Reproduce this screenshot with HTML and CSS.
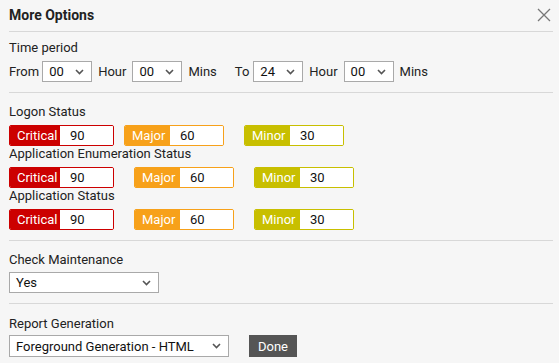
FILE: index.html
```html
<!DOCTYPE html>
<html lang="en">
<head>
    <meta charset="UTF-8">
    <title>More Options</title>
    <link rel="stylesheet" href="styles.css">
</head>
<body>
    <div class="dialog">
        <div class="header">
            <h1>More Options</h1>
            <svg class="close" width="14" height="14" viewBox="0 0 14 14">
                <path d="M1 1 L13 13 M13 1 L1 13" stroke="#777" stroke-width="1.3" fill="none"/>
            </svg>
        </div>

        <div class="section">
            <div class="label">Time period</div>
            <div class="row">
                <span class="txt first">From</span>
                <div class="select sm"><span>00</span><svg class="chev" width="9" height="6" viewBox="0 0 9 6"><path d="M1 1 L4.5 4.5 L8 1" stroke="#555" stroke-width="1.6" fill="none"/></svg></div>
                <span class="txt">Hour</span>
                <div class="select sm"><span>00</span><svg class="chev" width="9" height="6" viewBox="0 0 9 6"><path d="M1 1 L4.5 4.5 L8 1" stroke="#555" stroke-width="1.6" fill="none"/></svg></div>
                <span class="txt">Mins</span>
                <span class="txt to">To</span>
                <div class="select sm"><span>24</span><svg class="chev" width="9" height="6" viewBox="0 0 9 6"><path d="M1 1 L4.5 4.5 L8 1" stroke="#555" stroke-width="1.6" fill="none"/></svg></div>
                <span class="txt">Hour</span>
                <div class="select sm"><span>00</span><svg class="chev" width="9" height="6" viewBox="0 0 9 6"><path d="M1 1 L4.5 4.5 L8 1" stroke="#555" stroke-width="1.6" fill="none"/></svg></div>
                <span class="txt">Mins</span>
            </div>
        </div>

        <div class="section status">
            <div class="group">
                <div class="label">Logon Status</div>
                <div class="row">
                    <div class="thr critical"><span class="tag">Critical</span><span class="val">90</span></div>
                    <div class="thr major near"><span class="tag">Major</span><span class="val">60</span></div>
                    <div class="thr minor"><span class="tag">Minor</span><span class="val">30</span></div>
                </div>
            </div>
            <div class="group">
                <div class="label">Application Enumeration Status</div>
                <div class="row">
                    <div class="thr critical"><span class="tag">Critical</span><span class="val">90</span></div>
                    <div class="thr major"><span class="tag">Major</span><span class="val">60</span></div>
                    <div class="thr minor"><span class="tag">Minor</span><span class="val">30</span></div>
                </div>
            </div>
            <div class="group">
                <div class="label">Application Status</div>
                <div class="row">
                    <div class="thr critical"><span class="tag">Critical</span><span class="val">90</span></div>
                    <div class="thr major"><span class="tag">Major</span><span class="val">60</span></div>
                    <div class="thr minor"><span class="tag">Minor</span><span class="val">30</span></div>
                </div>
            </div>
        </div>

        <div class="section maint">
            <div class="label">Check Maintenance</div>
            <div class="row">
                <div class="select md"><span>Yes</span><svg class="chev" width="9" height="6" viewBox="0 0 9 6"><path d="M1 1 L4.5 4.5 L8 1" stroke="#555" stroke-width="1.6" fill="none"/></svg></div>
            </div>
        </div>

        <div class="section report">
            <div class="label">Report Generation</div>
            <div class="row">
                <div class="select lg"><span>Foreground Generation - HTML</span><svg class="chev" width="9" height="6" viewBox="0 0 9 6"><path d="M1 1 L4.5 4.5 L8 1" stroke="#555" stroke-width="1.6" fill="none"/></svg></div>
                <button class="btn">Done</button>
            </div>
        </div>
    </div>
</body>
</html>
```

FILE: styles.css
```css
* {
    margin: 0;
    padding: 0;
    box-sizing: border-box;
}

body {
    font-family: Roboto, "Liberation Sans", sans-serif;
    font-size: 13px;
    color: #222;
    background: #f6f6f6;
    width: 559px;
    height: 363px;
    overflow: hidden;
}

.dialog {
    padding: 0 6px 0 9px;
}

.header {
    display: flex;
    align-items: center;
    justify-content: space-between;
    height: 32px;
    border-bottom: 1px solid #d8d8d8;
    padding-bottom: 1px;
}

.header h1 {
    font-size: 14px;
    font-weight: bold;
    color: #222;
}

.close {
    margin-right: 2px;
    margin-top: -1px;
}

.section {
    padding: 8px 0 10px;
    border-bottom: 1px solid #d8d8d8;
}

.label {
    line-height: 16px;
    height: 16px;
}

.row {
    display: flex;
    align-items: center;
    margin-top: 5px;
    height: 21px;
}

.txt {
    margin: 0 6px 0 6px;
}

.txt.first {
    margin-left: 0;
    margin-right: 3px;
}

.txt.to {
    margin-left: 12px;
    margin-right: 4px;
}

.select {
    display: flex;
    align-items: center;
    justify-content: space-between;
    height: 21px;
    background: #fff;
    border: 1px solid #a9a9a9;
    padding: 0 7px 0 6px;
    color: #111;
}

.select.sm {
    width: 50px;
}

.select.md {
    width: 150px;
}

.select.lg {
    width: 220px;
}

.status {
    padding-top: 11px;
}

.thr {
    display: flex;
    height: 21px;
    width: 100px;
    border: 1px solid;
    border-radius: 2px;
    overflow: hidden;
    margin-right: 20px;
}

.thr.critical {
    width: 105px;
}

.thr.near {
    margin-left: -10px;
}

.thr.critical .tag {
    width: 50px;
}

.tag {
    width: 45px;
    color: #fff;
    line-height: 19px;
    padding-left: 7px;
}

.val {
    flex: 1;
    background: #fff;
    line-height: 19px;
    padding-left: 10px;
    color: #111;
}

.critical {
    border-color: #cc0000;
}

.critical .tag {
    background: #cc0000;
}

.major {
    border-color: #f7a11a;
}

.major .tag {
    background: #f7a11a;
}

.minor {
    border-color: #c8bf00;
}

.minor .tag {
    background: #c8bf00;
}

.maint {
    padding-top: 11px;
    padding-bottom: 10px;
    margin-right: 0;
}

.maint .row {
    margin-top: 4px;
}

.report {
    border-bottom: none;
    padding-top: 12px;
}

.report .row {
    margin-top: 3px;
    height: 22px;
}

.report .select {
    height: 22px;
}

.btn {
    margin-left: 20px;
    width: 48px;
    height: 22px;
    background: #555;
    color: #fff;
    border: none;
    font-family: inherit;
    font-size: 13px;
}
```
